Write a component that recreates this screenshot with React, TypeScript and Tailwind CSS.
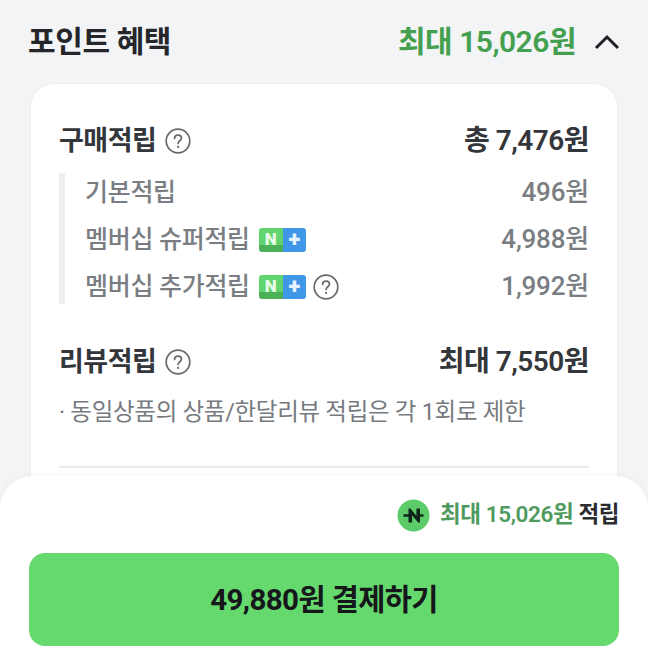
const font = { fontFamily: 'Roboto, "Noto Sans CJK KR", sans-serif' };

// 물음표 아이콘
const HelpIcon = () => (
  <svg width="26" height="26" viewBox="0 0 26 26" fill="none" className="shrink-0">
    <circle cx="13" cy="13" r="11.8" stroke="#666a6e" strokeWidth="1.7" />
    <path d="M9.6 10.4c0-2 1.5-3.3 3.5-3.3s3.4 1.2 3.4 3c0 2.6-3.4 2.7-3.4 5.4" stroke="#666a6e" strokeWidth="1.7" strokeLinecap="round" />
    <circle cx="13.1" cy="18.9" r="1.1" fill="#666a6e" />
  </svg>
);

// 멤버십 N+ 뱃지
const NPlusBadge = () => (
  <span className="flex h-[24px] w-[47px] shrink-0 overflow-hidden rounded-[3px]">
    <span className="flex w-[24px] items-center justify-center bg-gradient-to-b from-[#62d46f] from-70% to-[#4bb058] to-70% text-[17px] font-black leading-none text-[#e8fbe9]">N</span>
    <span className="flex flex-1 items-center justify-center bg-[#3f97e8] text-[22px] font-black leading-none text-[#e6f3ff]">+</span>
  </span>
);

const SubRow = ({ label, value, children }: { label: string; value: string; children?: React.ReactNode }) => (
  <div className="flex h-[37px] items-center justify-between pt-[2px]">
    <div className="flex items-center gap-[9px]">
      <span className="text-[25px] font-medium tracking-[-0.3px] text-[#7a7e82]">{label}</span>
      {children}
    </div>
    <span className="text-[26px] font-medium tracking-[-0.2px] text-[#7a7e82]">{value}</span>
  </div>
);

export default function App() {
  return (
    <div style={font} className="relative h-[652px] w-[648px] overflow-hidden bg-[#f3f4f6]">
      <div className="flex h-[83px] items-center justify-between pl-[28px] pr-[28px]">
        <h2 className="text-[30px] font-bold tracking-[-0.4px] text-[#24262a]">포인트 혜택</h2>
        <div className="flex items-center gap-[18px]">
          <span className="text-[30px] font-semibold tracking-[-0.5px] text-[#44a04f]">최대 15,026원</span>
          <svg width="26" height="16" viewBox="0 0 26 16" fill="none">
            <path d="M2 14 13 3l11 11" stroke="#1f2124" strokeWidth="3" />
          </svg>
        </div>
      </div>

      <div className="mx-[30px] h-[500px] rounded-[24px] border border-[#eceef0] bg-white px-[28px] pt-[36px]">
        <div className="flex h-[40px] items-center justify-between pt-[2px]">
          <div className="flex items-center gap-[9px]">
            <span className="text-[27px] font-semibold tracking-[-0.5px] text-[#33363a]">구매적립</span>
            <HelpIcon />
          </div>
          <span className="text-[28px] font-semibold tracking-[-0.5px] text-[#33363a]">총 7,476원</span>
        </div>

        <div className="mt-[13px] flex flex-col gap-[10px] border-l-[6px] border-[#eef0f2] pl-[20px]">
          <SubRow label="기본적립" value="496원" />
          <SubRow label="멤버십 슈퍼적립" value="4,988원">
            <NPlusBadge />
          </SubRow>
          <SubRow label="멤버십 추가적립" value="1,992원">
            <div className="flex items-center gap-[7px]">
              <NPlusBadge />
              <HelpIcon />
            </div>
          </SubRow>
        </div>

        <div className="mt-[37px] flex h-[40px] items-center justify-between pt-[2px]">
          <div className="flex items-center gap-[9px]">
            <span className="text-[27px] font-semibold tracking-[-0.5px] text-[#33363a]">리뷰적립</span>
            <HelpIcon />
          </div>
          <span className="text-[28px] font-semibold tracking-[-0.5px] text-[#33363a]">최대 7,550원</span>
        </div>

        <p className="mt-[14px] text-[23.5px] tracking-[-0.3px] text-[#767a7e]">· 동일상품의 상품/한달리뷰 적립은 각 1회로 제한</p>

        <div className="mt-[36px] h-[2px] bg-[#e8ebef]" />
      </div>

      {/* 하단 결제 시트 */}
      <div className="absolute inset-x-0 bottom-0 h-[176px] rounded-t-[32px] bg-white px-[29px] shadow-[0_-2px_6px_rgba(0,0,0,0.03)]">
        <div className="flex h-[77px] items-center justify-end gap-[10px] pt-[1px]">
          <svg width="33" height="33" viewBox="0 0 33 33" className="shrink-0">
            <circle cx="16.5" cy="16.5" r="16" fill="#5ccb6a" />
            <path d="M6.5 16.5h6M20.5 16.5h6" stroke="#10261a" strokeWidth="2.6" />
            <path d="M11.5 23.5h3.6v-7.2l6 7.2h1.9v-14h-3.6v7.2l-6-7.2h-1.9z" fill="#10261a" />
          </svg>
          <span className="text-[22.5px] font-semibold tracking-[-0.4px] text-[#4f9a5e]">
            최대 15,026원 <span className="text-[#2a2c30]">적립</span>
          </span>
        </div>
        <button className="flex h-[93px] w-full items-center justify-center rounded-[16px] bg-[#65d96e] pt-[2px] text-[29.5px] font-bold tracking-[-0.6px] text-[#15171a]">
          49,880원 결제하기
        </button>
      </div>
    </div>
  );
}
